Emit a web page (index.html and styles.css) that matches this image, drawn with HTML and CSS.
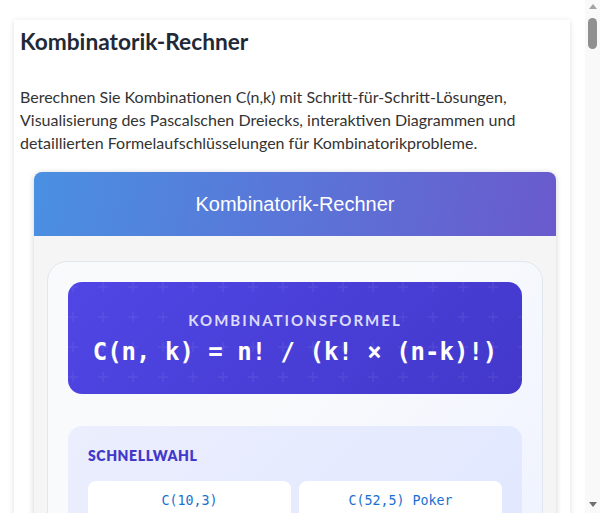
FILE: index.html
```html
<!DOCTYPE html>
<html lang="de">
<head>
<meta charset="utf-8">
<title>Kombinatorik-Rechner</title>
<link rel="stylesheet" href="styles.css">
</head>
<body>
<div class="app">
<div class="main">
<div class="page">
  <article class="card">
    <h1 class="title">Kombinatorik-Rechner</h1>
    <p class="intro">Berechnen Sie Kombinationen C(n,k) mit Schritt-für-Schritt-Lösungen, Visualisierung des Pascalschen Dreiecks, interaktiven Diagrammen und detaillierten Formelaufschlüsselungen für Kombinatorikprobleme.</p>
    <div class="widget">
      <div class="widget-head">Kombinatorik-Rechner</div>
      <div class="widget-body">
        <div class="panel">
          <div class="formula">
            <div class="formula-label">KOMBINATIONSFORMEL</div>
            <div class="formula-text">C(n, k) = n! / (k! × (n-k)!)</div>
          </div>
          <div class="quick">
            <div class="quick-label">SCHNELLWAHL</div>
            <div class="quick-grid">
              <button class="quick-btn">C(10,3)</button>
              <button class="quick-btn">C(52,5) Poker</button>
              <button class="quick-btn">C(49,6) Lotto</button>
              <button class="quick-btn">C(20,10)</button>
            </div>
          </div>
        </div>
      </div>
    </div>
  </article>
</div>
</div>
<div class="scrollbar" aria-hidden="true">
  <div class="sb-arrow sb-up"></div>
  <div class="sb-thumb"></div>
  <div class="sb-track"></div>
  <div class="sb-arrow sb-down"></div>
</div>
</div>
</body>
</html>
```
FILE: styles.css
```css
html, body {
  margin: 0;
  padding: 0;
  background: #ffffff;
}
.app {
  display: flex;
  height: 513px;
  overflow: hidden;
}
.main {
  flex: 1;
  min-width: 0;
  overflow: hidden;
}
.scrollbar {
  width: 15px;
  flex: none;
  background: #f9f9f9;
  display: flex;
  flex-direction: column;
  align-items: center;
  padding: 4px 0 6px 0;
  box-sizing: border-box;
}
.sb-arrow {
  width: 0;
  height: 0;
  border-left: 4px solid transparent;
  border-right: 4px solid transparent;
}
.sb-up {
  border-bottom: 5px solid #a3a3a3;
}
.sb-down {
  border-top: 5px solid #6f6f6f;
}
.sb-thumb {
  margin-top: 9px;
  width: 9px;
  height: 31px;
  border-radius: 5px;
  background: #909090;
}
.sb-track {
  flex: 1;
}
.page {
  padding: 20px 15px 40px 14px;
}
.card {
  background: #ffffff;
  box-shadow: 0 1px 6px rgba(0, 0, 0, 0.12);
  padding: 8px 6px 20px 6px;
}
.title {
  margin: 0;
  font-family: "Lato", "Noto Sans", sans-serif;
  font-weight: 700;
  font-size: 22.7px;
  line-height: 26px;
  color: #1f2937;
  padding-top: 1px;
}
.intro {
  margin: 30px 0 18px 0;
  font-family: "Lato", "Noto Sans", sans-serif;
  font-size: 16px;
  line-height: 23px;
  color: #333333;
}
.widget {
  margin: 0 8px 0 14px;
  border-radius: 8px;
  overflow: hidden;
  box-shadow: 0 1px 6px rgba(0, 0, 0, 0.18);
  background: #f5f5f5;
}
.widget-head {
  height: 64px;
  display: flex;
  align-items: center;
  justify-content: center;
  background: linear-gradient(100deg, #4a90e2 0%, #6a5acd 100%);
  color: #ffffff;
  font-family: "Liberation Sans", Arial, sans-serif;
  font-size: 20px;
}
.widget-body {
  padding: 25px 13px 30px 13px;
}
.panel {
  border: 1px solid #e0e7ef;
  border-radius: 20px;
  padding: 20px;
  background: linear-gradient(135deg, #f8fafc 0%, #f8fafc 45%, #eef2ff 100%);
  display: flex;
  flex-direction: column;
  gap: 32px;
}
.formula {
  height: 112px;
  border-radius: 14px;
  background-color: #4a40dc;
  background-image:
    url("data:image/svg+xml,%3Csvg xmlns='http://www.w3.org/2000/svg' width='30' height='30'%3E%3Cpath d='M15 10v10M10 15h10' stroke='%23ffffff' stroke-opacity='0.06' stroke-width='1.5'/%3E%3C/svg%3E"),
    linear-gradient(135deg, #4f46e5 0%, #4338ca 100%);
  background-position: -10px -10px, 0 0;
  display: flex;
  flex-direction: column;
  align-items: center;
  justify-content: center;
  gap: 8px;
  padding-top: 2px;
  box-sizing: border-box;
}
.formula-label {
  font-family: "Lato", "Noto Sans", sans-serif;
  font-weight: 700;
  font-size: 15px;
  letter-spacing: 2px;
  color: #dcdcfa;
  line-height: 18px;
}
.formula-text {
  font-family: "DejaVu Sans Mono", "Liberation Mono", monospace;
  font-size: 24px;
  font-weight: 700;
  color: #ffffff;
  line-height: 30px;
}
.quick {
  border-radius: 14px;
  background: linear-gradient(135deg, #ebeefd 0%, #e0e7ff 100%);
  padding: 21px 20px 20px 20px;
}
.quick-label {
  font-family: "Lato", "Noto Sans", sans-serif;
  font-weight: 800;
  font-size: 14px;
  letter-spacing: 0.6px;
  color: #4338ca;
  line-height: 17px;
  margin-bottom: 17px;
}
.quick-grid {
  display: grid;
  grid-template-columns: 1fr 1fr;
  gap: 8px;
}
.quick-btn {
  border: none;
  background: #ffffff;
  border-radius: 8px;
  height: 40px;
  font-family: "DejaVu Sans Mono", "Liberation Mono", monospace;
  font-size: 13.3px;
  color: #1a6fd0;
  padding: 0;
  line-height: 16px;
}
```
